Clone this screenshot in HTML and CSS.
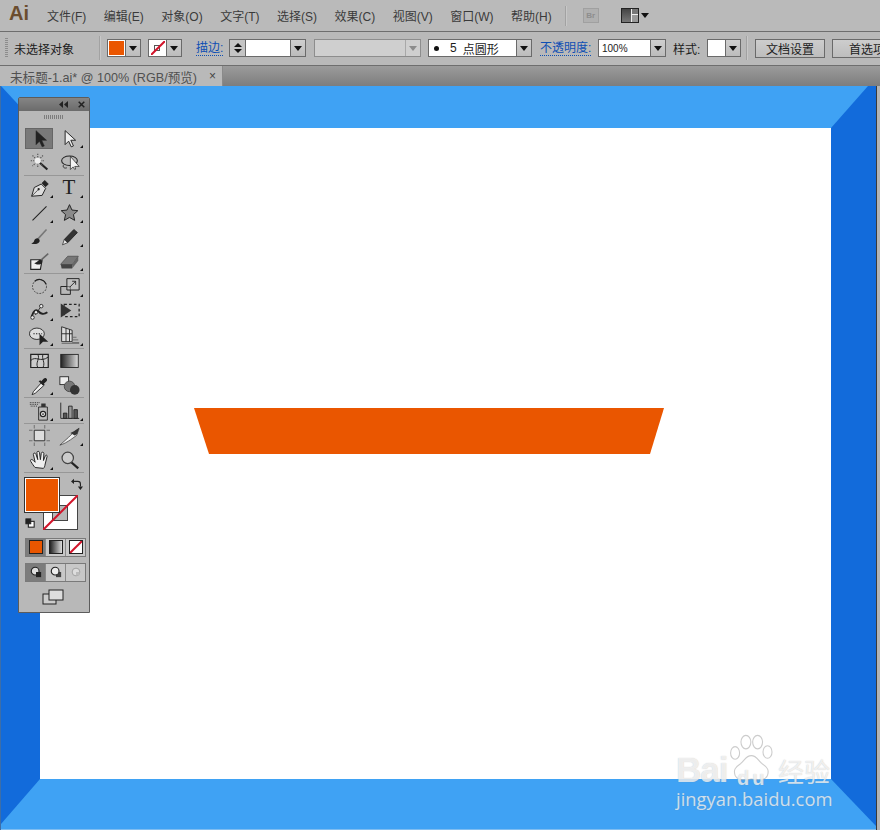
FILE: index.html
```html
<!DOCTYPE html>
<html lang="zh">
<head>
<meta charset="utf-8">
<title>Adobe Illustrator</title>
<link rel="stylesheet" href="styles.css">
</head>
<body>
<svg class="defs" aria-hidden="true">
  <defs>
    <linearGradient id="gr"><stop offset="0" stop-color="#222"/><stop offset="1" stop-color="#ddd"/></linearGradient>
  </defs>
  <symbol id="i-sel" viewBox="0 0 24 24"><path d="M8 3v16l4-4 3 6.500 2.500-1-3-6.500H20z" fill="#222" stroke="#222" stroke-width=".6"/></symbol>
  <symbol id="i-dir" viewBox="0 0 24 24"><path d="M7 3v16l4-4 3 6.500 2.500-1-3-6.500H19z" fill="#eee" stroke="#222" stroke-width="1.100"/></symbol>
  <symbol id="i-wand" viewBox="0 0 24 24"><path d="M12 12l9 8" stroke="#222" stroke-width="2.400"/><path d="M10 2v16M2 10h16M4 4l12 12M16 4L4 16" stroke="#555" stroke-width="1.300" stroke-dasharray="1.500 1.200"/><circle cx="10" cy="10" r="3.500" fill="#eee"/></symbol>
  <symbol id="i-lasso" viewBox="0 0 24 24"><ellipse cx="12" cy="10" rx="9" ry="5.500" fill="none" stroke="#222" stroke-width="1.200"/><path d="M5 15c-1 3 2 4 4 3" fill="none" stroke="#222"/><path d="M13 5v15l3-3 2 3 1-.5-1-3h5z" fill="#f4f4f4" stroke="#222" stroke-width=".8"/></symbol>
  <symbol id="i-pen" viewBox="0 0 24 24"><path d="M3 22l3-10 8-4 5 5-4 8z" fill="#ddd" stroke="#222" stroke-width="1.100"/><path d="M15 7l3-3 4 4-3 3z" fill="#222" stroke="#222"/><path d="M3 22l7-7" stroke="#222" stroke-width=".8"/><circle cx="11" cy="14" r="1.300" fill="#222"/></symbol>
  <symbol id="i-line" viewBox="0 0 24 24"><path d="M4 21L20 5" stroke="#222" stroke-width="1.200"/></symbol>
  <symbol id="i-star" viewBox="0 0 24 24"><path d="M12 3l2.800 6.200 6.700.7-5 4.500 1.400 6.600-5.900-3.400L6.100 21l1.400-6.600-5-4.500 6.700-.7z" fill="#8a8a8a" stroke="#222" stroke-width="1.100"/></symbol>
  <symbol id="i-brush" viewBox="0 0 24 24"><path d="M20 4L10 15" stroke="#777" stroke-width="1.800"/><path d="M10 14c-3 0-4 2-4.500 4-.4 1-2 1.500-3 2 3 1 8 1 9.500-2 .6-1.500 0-3-2-4z" fill="#222"/></symbol>
  <symbol id="i-pencil" viewBox="0 0 24 24"><path d="M17 4l4 3.500L10 19l-4-3.500z" fill="#333" stroke="#222"/><path d="M6 15.500l4 3.500-6 2.500z" fill="#e8e8e8" stroke="#222" stroke-width=".8"/></symbol>
  <symbol id="i-blob" viewBox="0 0 24 24"><path d="M2 10h13l-2 11H2z" fill="#eee" stroke="#222" stroke-width="1.300"/><path d="M22 3L13 11" stroke="#666" stroke-width="1.800"/><path d="M13 10c-3 0-3 3-7 4 3 2 8 2 9-1 .4-1.500-.5-3-2-3z" fill="#222"/></symbol>
  <symbol id="i-erase" viewBox="0 0 24 24"><path d="M2 15l8-9h12l-7 10H3z" fill="#777" stroke="#555"/><path d="M2 15h13v5H3z" fill="#444"/><path d="M15 16l7-10v5l-7 9z" fill="#666"/></symbol>
  <symbol id="i-rot" viewBox="0 0 24 24"><circle cx="12" cy="12" r="8" fill="none" stroke="#333" stroke-dasharray="2 1.500"/><path d="M6.500 6a8 8 0 0 1 13 3.500" fill="none" stroke="#222" stroke-width="1.300"/></symbol>
  <symbol id="i-scale" viewBox="0 0 24 24"><path d="M2 12h11v9H2z" fill="none" stroke="#222" stroke-width="1.100"/><path d="M9 3h14v13H9z" fill="#ccc" fill-opacity=".5" stroke="#222" stroke-width="1.100"/><path d="M12 13l7-7M15 6h4v4" fill="none" stroke="#222"/></symbol>
  <symbol id="i-warp" viewBox="0 0 24 24"><path d="M3 19c2-7 5-9 8-6 2 3 6 4 10 1" fill="none" stroke="#222" stroke-width="2.200"/><path d="M7 17l7-10" stroke="#222"/><circle cx="4" cy="20" r="2" fill="#eee" stroke="#222"/><circle cx="8" cy="14" r="2" fill="#eee" stroke="#222"/><circle cx="14" cy="7" r="2" fill="#eee" stroke="#222"/></symbol>
  <symbol id="i-free" viewBox="0 0 24 24"><path d="M6 5h17v14H6z" fill="none" stroke="#222" stroke-width="1.400" stroke-dasharray="3 2.500"/><path d="M2 4l12 8-12 8z" fill="#333"/></symbol>
  <symbol id="i-sym" viewBox="0 0 24 24"><ellipse cx="9" cy="10" rx="8.500" ry="6.500" fill="#ddd" stroke="#222"/><path d="M5 10h10" stroke="#222" stroke-dasharray="1.500 1.500" stroke-width="1.300"/><path d="M12 10l10 9-6 0-4 4z" fill="#222"/></symbol>
  <symbol id="i-persp" viewBox="0 0 24 24"><path d="M3 2l12 4v13H3z" fill="#ddd" stroke="#222"/><path d="M8 3.500V19M12 5V19M3 10h12" stroke="#222"/><path d="M15 14h5M15 17h7M15 20h8M3 21h20" stroke="#666"/></symbol>
  <symbol id="i-mesh" viewBox="0 0 24 24"><path d="M2 5h20v15H2z" fill="#ccc" stroke="#222" stroke-width="1.400"/><path d="M2 12c6-6 11 3 20-4M10 5c3 5-3 9 0 15M16 5c-2 5 3 9 0 15" fill="none" stroke="#222" stroke-width="1.100"/></symbol>
  <symbol id="i-grad" viewBox="0 0 24 24"><rect x="2" y="5" width="20" height="15" fill="url(#gr)" stroke="#222"/></symbol>
  <symbol id="i-drop" viewBox="0 0 24 24"><path d="M14 9l-9 10-1.500 3.500L7 21l10-9z" fill="#eee" stroke="#222"/><path d="M14 7l3-3c2-2 5 1 3 3l-3 3 1 1-2 1-5-5 2-1z" fill="#222"/></symbol>
  <symbol id="i-blend" viewBox="0 0 24 24"><rect x="1" y="2" width="10" height="9" fill="#eee" stroke="#222"/><circle cx="12" cy="13" r="6" fill="#777" stroke="#444"/><circle cx="18" cy="17" r="5.500" fill="#333"/></symbol>
  <symbol id="i-spray" viewBox="0 0 24 24"><path d="M11 8h10v15H11z" fill="#bbb" stroke="#222"/><path d="M14 4h5v4h-5z" fill="#333"/><circle cx="16" cy="16" r="3" fill="#eee" stroke="#222" stroke-width="1.400"/><circle cx="16" cy="16" r="1" fill="#222"/><path d="M1 3h11M1 5h9M2 7h8" stroke="#222" stroke-dasharray="1 1"/></symbol>
  <symbol id="i-bars" viewBox="0 0 24 24"><path d="M2 3v18h21" fill="none" stroke="#222"/><path d="M5 15h4v6H5z" fill="#555" stroke="#222"/><path d="M11 7h4v14h-4z" fill="#999" stroke="#222"/><path d="M17 11h4v10h-4z" fill="#555" stroke="#222"/></symbol>
  <symbol id="i-board" viewBox="0 0 24 24"><path d="M6 6h12v12H6z" fill="#ddd" stroke="#222"/><path d="M0 6h4M20 6h4M0 18h4M20 18h4M6 0v4M6 20v4M18 0v4M18 20v4" stroke="#666"/></symbol>
  <symbol id="i-slice" viewBox="0 0 24 24"><path d="M1 23l10-9 5-5 7-5-3 8-7 5c-3 2-8 5-12 6z" fill="#eee" stroke="#333" stroke-width=".8"/><path d="M13 9l4-2 6-4-2 7-3 2z" fill="#333"/></symbol>
  <symbol id="i-hand" viewBox="0 0 24 24"><path d="M7 20c-2-2-3-4-5-7-1-2 1-3 3-1l2 2-2-9c0-2 2-2 3 0l2 6-1-8c0-2 3-2 3 0l1 8 1-7c0-2 3-2 3 0l-.5 8 2-5c1-2 3-1 2 1l-2 8c-.5 3-1 4-2 5z" fill="#eee" stroke="#222" stroke-width="1.100"/></symbol>
  <symbol id="i-zoom" viewBox="0 0 24 24"><path d="M14 14l8 7" stroke="#222" stroke-width="2.600"/><circle cx="10" cy="9" r="6.500" fill="#ccc" stroke="#444" stroke-width="1.400"/></symbol>
  <symbol id="i-none" viewBox="0 0 24 24"><path d="M0 24L24 0" stroke="#d2142a" stroke-width="2" vector-effect="non-scaling-stroke"/></symbol>
</svg>

<header class="menubar">
  <span class="logo">Ai</span>
  <nav class="menu">
    <span>文件(F)</span><span>编辑(E)</span><span>对象(O)</span><span>文字(T)</span><span>选择(S)</span><span>效果(C)</span><span>视图(V)</span><span>窗口(W)</span><span>帮助(H)</span>
  </nav>
  <i class="vsep menu-sep"></i>
  <span class="br">Br</span>
  <span class="layout"><i class="lay-a"></i><i class="lay-b"></i><i class="lay-c"></i></span>
  <i class="tri tri-lay"></i>
</header>

<section class="controlbar">
  <i class="grip"></i>
  <span class="noselect">未选择对象</span>
  <i class="vsep sep-a"></i>
  <span class="combo m-fill"><span class="sw sw-fill"></span><span class="drop"><i class="tri"></i></span></span>
  <span class="combo m-stroke"><span class="sw sw-none"><i class="tiny"></i><svg class="slash"><use href="#i-none"/></svg></span><span class="drop"><i class="tri"></i></span></span>
  <a class="link m-miao">描边:</a>
  <span class="combo m-spin"><span class="spin"><i class="tri tri-up"></i><i class="tri"></i></span><span class="field"></span><span class="drop"><i class="tri"></i></span></span>
  <span class="combo disabled m-dis"><span class="field"></span><span class="drop"><i class="tri"></i></span></span>
  <span class="combo m-brush"><span class="field f-brush"><i class="dot"></i><em>5</em>点圆形</span><span class="drop"><i class="tri"></i></span></span>
  <a class="link m-op">不透明度:</a>
  <span class="combo m-pct"><span class="field f-pct">100%</span><span class="drop"><i class="tri"></i></span></span>
  <span class="plain m-style">样式:</span>
  <span class="combo m-sty"><span class="sw sw-white"></span><span class="drop"><i class="tri"></i></span></span>
  <i class="vsep sep-b"></i>
  <button class="btn b-doc">文档设置</button>
  <button class="btn b-pref">首选项</button>
</section>

<section class="tabbar">
  <div class="tab"><span>未标题-1.ai* @ 100% (RGB/预览)</span><span class="tabx">×</span></div>
</section>

<main class="canvas">
  <svg class="art" viewBox="0 86 880 744" width="880" height="744" aria-hidden="true">
    <rect x="0" y="86" width="880" height="744" fill="#3fa2f4"/>
    <polygon points="1,86 40,128 40,779 1,824" fill="#126bdb"/>
    <polygon points="868,86 876,86 876,826 831,779 831,128" fill="#126bdb"/>
    <rect x="0" y="86" width="1" height="744" fill="#3d6ea8"/>
    <rect x="876" y="86" width="1" height="744" fill="#3a3a3a"/>
    <rect x="877" y="86" width="3" height="744" fill="#b4b4b4"/>
    <rect x="1" y="829" width="875" height="1" fill="#7fbdf0"/>
    <rect x="40" y="128" width="791" height="651" fill="#fff"/>
    <polygon points="194,408 664,408 650,454 209,454" fill="#ea5600"/>
  </svg>

  <aside class="tools">
    <div class="tools-head">
      <svg class="collapse" viewBox="0 0 9 7"><path d="M4 0v7L0 3.500zM9 0v7L5 3.500z" fill="#222"/></svg>
      <svg class="close" viewBox="0 0 7 7"><path d="M.7.7l5.600 5.600M6.300.7L.7 6.300" stroke="#222" stroke-width="1.500"/></svg>
    </div>
    <div class="tools-grip"></div>
    <div class="group">
      <div class="tool on"><svg><use href="#i-sel"/></svg></div>
      <div class="tool more"><svg><use href="#i-dir"/></svg></div>
      <div class="tool"><svg><use href="#i-wand"/></svg></div>
      <div class="tool"><svg><use href="#i-lasso"/></svg></div>
    </div>
    <div class="group">
      <div class="tool more"><svg><use href="#i-pen"/></svg></div>
      <div class="tool more tool-t">T</div>
      <div class="tool more"><svg><use href="#i-line"/></svg></div>
      <div class="tool more"><svg><use href="#i-star"/></svg></div>
      <div class="tool"><svg><use href="#i-brush"/></svg></div>
      <div class="tool more"><svg><use href="#i-pencil"/></svg></div>
      <div class="tool"><svg><use href="#i-blob"/></svg></div>
      <div class="tool more"><svg><use href="#i-erase"/></svg></div>
    </div>
    <div class="group">
      <div class="tool more"><svg><use href="#i-rot"/></svg></div>
      <div class="tool more"><svg><use href="#i-scale"/></svg></div>
      <div class="tool more"><svg><use href="#i-warp"/></svg></div>
      <div class="tool"><svg><use href="#i-free"/></svg></div>
      <div class="tool more"><svg><use href="#i-sym"/></svg></div>
      <div class="tool more"><svg><use href="#i-persp"/></svg></div>
    </div>
    <div class="group">
      <div class="tool"><svg><use href="#i-mesh"/></svg></div>
      <div class="tool"><svg><use href="#i-grad"/></svg></div>
      <div class="tool more"><svg><use href="#i-drop"/></svg></div>
      <div class="tool"><svg><use href="#i-blend"/></svg></div>
    </div>
    <div class="group">
      <div class="tool more"><svg><use href="#i-spray"/></svg></div>
      <div class="tool more"><svg><use href="#i-bars"/></svg></div>
    </div>
    <div class="group">
      <div class="tool"><svg><use href="#i-board"/></svg></div>
      <div class="tool more"><svg><use href="#i-slice"/></svg></div>
      <div class="tool more"><svg><use href="#i-hand"/></svg></div>
      <div class="tool"><svg><use href="#i-zoom"/></svg></div>
    </div>

    <div class="colors">
      <div class="stroke-box"><i class="stroke-in"></i><svg class="slash"><use href="#i-none"/></svg></div>
      <div class="fill-box"></div>
      <svg class="swap" viewBox="0 0 14 14"><path d="M2 4h6a3 3 0 0 1 3 3v3" fill="none" stroke="#222" stroke-width="1.300"/><path d="M0 4l3.500-3v6zM11 14L8 10h6z" fill="#222"/></svg>
      <svg class="defaults" viewBox="0 0 12 12"><rect x="4" y="4" width="7" height="7" fill="#fff" stroke="#222" stroke-width="1.300"/><rect x="1" y="1" width="6" height="6" fill="#222" stroke="#222"/></svg>
    </div>

    <div class="seg seg-mode">
      <span class="cell on"><i class="m-o"></i></span>
      <span class="cell lt"><i class="m-g"></i></span>
      <span class="cell lt"><i class="m-n"><svg class="slash"><use href="#i-none"/></svg></i></span>
    </div>
    <div class="seg seg-draw">
      <span class="cell on"><svg viewBox="0 0 14 14"><circle cx="6" cy="6" r="4.500" fill="#ddd" stroke="#222" stroke-width="1.300"/><rect x="7" y="7" width="6" height="6" fill="#222"/></svg></span>
      <span class="cell lt"><svg viewBox="0 0 14 14"><rect x="7" y="7" width="6" height="6" fill="#444"/><circle cx="6" cy="6" r="4.500" fill="#eee" stroke="#222" stroke-width="1.300"/></svg></span>
      <span class="cell lt"><svg viewBox="0 0 14 14"><circle cx="7" cy="7" r="4.500" fill="#ddd" stroke="#999"/><path d="M7 7h4v4H7z" fill="#bbb"/></svg></span>
    </div>
    <div class="screen">
      <svg viewBox="0 0 22 16"><rect x="1" y="5" width="13" height="10" fill="#ccc" stroke="#222"/><rect x="7" y="1" width="14" height="10" fill="#ddd" stroke="#222"/></svg>
    </div>
  </aside>

  <div class="mark" aria-label="Baidu 经验">
    <svg class="paw" viewBox="0 0 60 60" aria-hidden="true">
      <g fill="#fff" fill-opacity=".55" stroke="#9a9a9a" stroke-opacity=".5" stroke-width="1.200">
        <ellipse cx="9" cy="21" rx="5" ry="7"/>
        <ellipse cx="21" cy="9" rx="5.500" ry="7.500"/>
        <ellipse cx="34" cy="9" rx="5.500" ry="7.500"/>
        <ellipse cx="45" cy="20" rx="5" ry="7"/>
        <path d="M27 24c6 0 7 5 12 9 6 4 8 7 6 13-2 5-9 6-18 4-8 2-16 1-18-4-2-6 0-9 6-13 5-4 6-9 12-9z"/>
      </g>
    </svg>
    <span class="mk-bai">Bai</span>
    <span class="mk-du">du</span>
    <span class="mk-jy">经验</span>
    <span class="mk-url">jingyan.baidu.com</span>
  </div>
</main>
</body>
</html>
```

FILE: styles.css
```css
* { box-sizing: border-box; }
html, body { margin: 0; padding: 0; }
body {
  width: 880px;
  height: 830px;
  overflow: hidden;
  background: #b9b9b9;
  color: #2a2a2a;
  font-family: "Liberation Sans", "Noto Sans CJK SC", sans-serif;
  font-size: 12px;
}
i, em { font-style: normal; display: block; }
.defs { position: absolute; width: 0; height: 0; }

/* menu bar */
.menubar {
  height: 32px;
  display: flex;
  align-items: center;
  background: #bababa;
  border-bottom: 1px solid #6e6e6e;
}
.logo {
  margin-left: 9px;
  width: 38px;
  color: #6b4d2f;
  font: bold 20px "Liberation Sans", sans-serif;
  position: relative;
  top: -2px;
}
.menu { display: flex; gap: 17.500px; font-size: 12px; color: #3a3a3a; }
.vsep { width: 2px; background: #a2a2a2; border-right: 1px solid #c8c8c8; }
.menu-sep { height: 20px; margin-left: 13px; }
.br {
  margin-left: 16px;
  width: 16px;
  height: 15px;
  border: 1px solid #a0a0a0;
  background: #b0b0b0;
  color: #8d8d8d;
  font: bold 8px/13px "Liberation Sans", sans-serif;
  text-align: center;
}
.layout {
  margin-left: 22px;
  width: 18px;
  height: 15px;
  display: grid;
  grid-template-columns: 10px 6px;
  grid-template-rows: 6px 7px;
  border: 1px solid #222;
  background: #eee;
}
.lay-a { grid-row: 1 / 3; background: linear-gradient(#444, #777); border-right: 1px solid #eee; }
.lay-b { background: #777; border-bottom: 1px solid #eee; }
.lay-c { background: #999; }
.tri {
  width: 0;
  height: 0;
  border-left: 4px solid transparent;
  border-right: 4px solid transparent;
  border-top: 5px solid #111;
}
.tri-up { border-top: 0; border-bottom: 5px solid #111; }
.tri-lay { margin-left: 2px; margin-top: -1px; }

/* control bar */
.controlbar {
  height: 34px;
  display: flex;
  align-items: center;
  overflow: hidden;
  background: #b9b9b9;
  border-bottom: 1px solid #6e6e6e;
  font-size: 12px;
  color: #1c1c1c;
  padding-bottom: 1px;
}
.controlbar > * { flex: none; }
.grip {
  margin-left: 5px;
  width: 3px;
  height: 20px;
  background: repeating-linear-gradient(#8c8c8c 0 1px, transparent 1px 2px);
}
.noselect { margin-left: 6px; width: 60px; white-space: nowrap; }
.sep-a { height: 24px; margin-left: 25px; }
.sep-b { height: 24px; margin-left: 5px; }
.combo {
  height: 18px;
  display: flex;
  border: 1px solid #6a6a6a;
  background: #fff;
}
.drop {
  width: 15px;
  flex: none;
  display: flex;
  align-items: center;
  justify-content: center;
  background: linear-gradient(#cfcfcf, #bcbcbc);
  border-left: 1px solid #6a6a6a;
}
.sw { width: 17px; position: relative; background: #fff; }
.sw-fill { border: 1px solid #fff; background: #ea5600; }
.tiny { position: absolute; left: 5px; top: 5px; width: 6px; height: 6px; border: 1px solid #555; }
.sw-none .slash { position: absolute; left: 2px; top: 1px; width: 14px; height: 14px; }
.m-fill { margin-left: 6px; width: 34px; }
.m-stroke { margin-left: 7px; width: 34px; }
.link {
  color: #0e4fb4;
  border-bottom: 1px dotted #0e4fb4;
  line-height: 14px;
  white-space: nowrap;
}
.m-miao { margin-left: 14px; width: 27px; }
.m-spin { margin-left: 6px; width: 77px; }
.spin {
  width: 16px;
  flex: none;
  display: flex;
  flex-direction: column;
  justify-content: space-evenly;
  align-items: center;
  background: #c4c4c4;
  border-right: 1px solid #6a6a6a;
}
.spin .tri { border-top-width: 4px; }
.spin .tri-up { border-top-width: 0; border-bottom-width: 4px; }
.field { flex: 1; display: flex; align-items: center; min-width: 0; background: #fff; white-space: nowrap; }
.disabled { border-color: #8d8d8d; background: #cfcfcf; }
.disabled .field { background: #cfcfcf; }
.disabled .drop { background: #cfcfcf; border-left-color: #a8a8a8; }
.disabled .tri { border-top-color: #8c8c8c; }
.m-dis { margin-left: 8px; width: 107px; }
.m-brush { margin-left: 7px; width: 104px; }
.f-brush { font-size: 12px; padding-left: 5px; }
.dot { width: 5px; height: 5px; border-radius: 50%; background: #111; }
.f-brush em { margin: 0 6px 0 11px; }
.m-op { margin-left: 8px; width: 51px; }
.m-pct { margin-left: 7px; width: 68px; }
.f-pct { font-size: 10px; padding-left: 3px; }
.m-style { margin-left: 7px; width: 27px; white-space: nowrap; }
.m-sty { margin-left: 7px; width: 34px; }
.btn {
  height: 19px;
  padding: 0;
  border: 1px solid #6a6a6a;
  background: linear-gradient(#cdcdcd, #bdbdbd);
  font: 12px "Liberation Sans", "Noto Sans CJK SC", sans-serif;
  color: #1c1c1c;
}
.b-doc { margin-left: 7px; width: 70px; }
.b-pref { margin-left: 7px; width: 70px; }

/* tab bar */
.tabbar {
  height: 20px;
  background: linear-gradient(#9b9b9b, #7d7d7d);
}
.tab {
  width: 223px;
  height: 20px;
  display: flex;
  align-items: center;
  justify-content: space-between;
  padding: 0 6px 0 10px;
  background: #b9b9b9;
  border-right: 1px solid #8a8a8a;
  font-size: 12.600px;
  color: #505050;
  white-space: nowrap;
}
.tabx { font-size: 12px; color: #444; }

/* canvas */
.canvas { position: relative; width: 880px; height: 744px; overflow: hidden; }
.art { display: block; }

/* tools panel */
.tools {
  position: absolute;
  left: 18px;
  top: 11px;
  width: 72px;
  height: 516px;
  background: #b8b8b8;
  border: 1px solid #5c5c5c;
  border-radius: 2px 2px 0 0;
}
.tools-head {
  height: 13px;
  display: flex;
  justify-content: flex-end;
  align-items: center;
  gap: 10px;
  padding-right: 4px;
  background: linear-gradient(#858585, #6b6b6b);
}
.collapse { width: 9px; height: 7px; }
.close { width: 7px; height: 7px; }
.tools-grip {
  width: 20px;
  height: 4px;
  margin: 4px auto 7px;
  background: repeating-linear-gradient(90deg, #7c7c7c 0 1px, transparent 1px 2px);
}
.group {
  display: grid;
  grid-template-columns: 30px 30px;
  grid-auto-rows: 24.400px;
  width: 60px;
  margin-left: 5px;
  border-bottom: 1px solid #979797;
}
.tool { position: relative; display: flex; align-items: center; justify-content: center; }
.tool svg { width: 21px; height: 21px; }
.tool.on { background: #797979; border: 1px solid #666; margin: 2px 1px 1px; }
.tool.more::after {
  content: "";
  position: absolute;
  right: 1px;
  bottom: 2px;
  width: 0;
  height: 0;
  border-left: 3px solid transparent;
  border-bottom: 3px solid #111;
}
.tool-t { font: 21px "Liberation Serif", serif; color: #222; }

.colors { position: relative; height: 60px; margin: 4.500px 0 0 6px; }
.fill-box {
  position: absolute;
  left: 0;
  top: 0;
  width: 34px;
  height: 34px;
  background: #ea5600;
  border: 1px solid #fff;
  outline: 1px solid #333;
}
.stroke-box {
  position: absolute;
  left: 18px;
  top: 17px;
  width: 35px;
  height: 35px;
  background: #fff;
  border: 1px solid #444;
}
.stroke-in { position: absolute; left: 8px; top: 9px; width: 16px; height: 16px; background: #b8b8b8; border: 1px solid #444; }
.stroke-box .slash { position: absolute; left: -1px; top: -1px; width: 35px; height: 35px; }
.swap { position: absolute; left: 46px; top: 0; width: 12px; height: 12px; }
.defaults { position: absolute; left: 0; top: 40px; width: 10px; height: 10px; }

.seg {
  display: flex;
  width: 61px;
  height: 19px;
  margin-left: 6px;
  border: 1px solid #7a7a7a;
  background: #c8c8c8;
}
.cell {
  flex: 1;
  display: flex;
  align-items: center;
  justify-content: center;
  border-right: 1px solid #8a8a8a;
}
.cell:last-child { border-right: 0; }
.cell.on { background: #7c7c7c; }
.cell svg { width: 12px; height: 12px; }
.seg-draw { margin-top: 6px; }
.m-o, .m-g, .m-n { width: 14px; height: 14px; border: 1px solid #222; position: relative; }
.m-o { background: #ea5600; }
.m-g { background: linear-gradient(90deg, #222, #ddd); }
.m-n { background: #fff; }
.m-n .slash { position: absolute; left: 0; top: 0; width: 12px; height: 12px; }
.screen { display: flex; justify-content: center; margin: 7px 3px 0 0; }
.screen svg { width: 22px; height: 16px; }

/* watermark */
.mark { position: absolute; left: 670px; top: 640px; width: 170px; height: 90px; }
.paw { position: absolute; left: 57px; top: 8px; width: 54px; height: 54px; }
.mk-bai, .mk-du, .mk-jy, .mk-url {
  position: absolute;
  color: rgba(255, 255, 255, .72);
  text-shadow: 0 0 1px rgba(120, 120, 120, .45);
  white-space: nowrap;
}
.mk-bai { left: 6px; top: 29px; font: bold 35px/30px "Liberation Sans", sans-serif; letter-spacing: -1px; }
.mk-du { left: 67px; top: 44px; font: bold 20px/16px "Liberation Sans", sans-serif; letter-spacing: 3px; }
.mk-jy { left: 108px; top: 30px; font: 26px/30px "Noto Sans CJK SC", sans-serif; }
.mk-url { left: 6px; top: 61px; font: 18.400px/24px "Open Sans", sans-serif; }
```
